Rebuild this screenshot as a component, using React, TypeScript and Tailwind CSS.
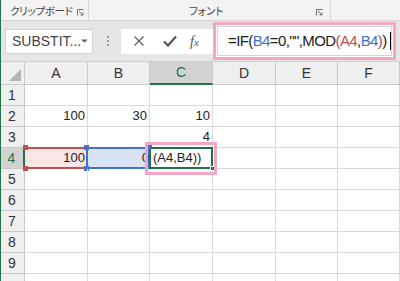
import React from 'react';

const cols = [
  { key: 'A', w: 'w-[63px]' },
  { key: 'B', w: 'w-[62px]' },
  { key: 'C', w: 'w-[63px]' },
  { key: 'D', w: 'w-[63px]' },
  { key: 'E', w: 'w-[62px]' },
  { key: 'F', w: 'w-[62px]' },
];

const values: Record<string, string> = {
  A2: '100',
  B2: '30',
  C2: '10',
  C3: '4',
  A4: '100',
};

const Launcher: React.FC = () => (
  <svg width="7" height="7" viewBox="0 0 7 7" className="text-gray-500">
    <path d="M0.5 6.5V0.5H6.5" fill="none" stroke="currentColor" strokeWidth="1" />
    <path d="M2 2L6 6M3.5 6H6V3.5" fill="none" stroke="currentColor" strokeWidth="1" />
  </svg>
);

const Cell: React.FC<{ col: string; row: number; w: string }> = ({ col, row, w }) => {
  const id = `${col}${row}`;
  const base = `relative h-full ${w} shrink-0 border-r border-b border-[#dadada]`;

  if (id === 'A4') {
    return (
      <div className={`${base} bg-[#fbe5e6]`}>
        <div className="absolute -top-px -left-px right-0 -bottom-px border-y-2 border-[#c0504d]" />
        <span className="absolute left-[-2px] top-[-3px] h-[5px] w-[5px] bg-[#c0504d]" />
        <span className="absolute left-[-2px] bottom-[-3px] h-[5px] w-[5px] bg-[#c0504d]" />
        <div className="relative flex h-full items-center justify-end pr-[2px] text-[13px] text-[#222]">100</div>
      </div>
    );
  }
  if (id === 'B4') {
    return (
      <div className={`${base} bg-[#dae3f3]`}>
        <div className="absolute -top-px -left-[2px] -right-px -bottom-px border-2 border-[#4472c4]" />
        <span className="absolute left-[-4px] top-[-3px] h-[5px] w-[5px] bg-[#4472c4]" />
        <span className="absolute right-[-3px] top-[-3px] h-[5px] w-[5px] bg-[#4472c4]" />
        <span className="absolute left-[-4px] bottom-[-3px] h-[5px] w-[5px] bg-[#4472c4]" />
        <div className="relative flex h-full items-center justify-end pr-0 text-[13px] text-[#222]">
          <span>0</span>
        </div>
      </div>
    );
  }
  if (id === 'C4') {
    return (
      <div className={`${base} z-10 bg-white`}>
        <div className="absolute -top-px -left-px -right-px -bottom-px border-2 border-[#217346]" />
        <span className="absolute right-[-3px] bottom-[-3px] h-[5px] w-[5px] border border-white bg-[#217346]" />
        <span className="absolute left-[-3px] top-[-3px] h-[4px] w-[4px] bg-[#4472c4]" />
        <div className="relative flex h-full items-center pl-[3px] text-[13px] text-[#222]">(A4,B4))</div>
        <div className="absolute -top-[6px] -left-[5px] -right-[5px] -bottom-[7px] border-[3px] border-[#f4a7c4]" />
      </div>
    );
  }

  return (
    <div className={base}>
      <div className="flex h-full items-center justify-end pr-[2px] text-[13px] text-[#222]">{values[id] ?? ''}</div>
    </div>
  );
};

const App: React.FC = () => {
  const rows = [1, 2, 3, 4, 5, 6, 7, 8, 9, 10];

  return (
    <div className="relative h-[281px] w-[400px] overflow-hidden bg-white font-['Liberation_Sans','Noto_Sans_CJK_JP',sans-serif]">
      {/* window edge */}
      <div className="absolute left-0 top-0 z-30 h-full w-px bg-[#217346]" />

      {/* ribbon group labels */}
      <div className="flex h-[21px] border-b border-[#d6d6d6] bg-[#f3f3f3] text-[10.5px] text-[#444] font-['Noto_Sans_CJK_JP',sans-serif] [font-feature-settings:'palt']">
        <div className="flex w-[89px] items-center whitespace-nowrap border-r border-[#d6d6d6] pl-[10px] pt-[1px]">
          <span className="tracking-[-0.3px]">クリップボード</span>
          <span className="ml-auto mr-[4px] mt-[3px]"><Launcher /></span>
        </div>
        <div className="flex w-[242px] items-center whitespace-nowrap border-r border-[#d6d6d6] pt-[1px]">
          <span className="ml-[100px]">フォント</span>
          <span className="ml-auto mr-[7px] mt-[3px]"><Launcher /></span>
        </div>
      </div>

      {/* formula bar */}
      <div className="flex h-[40px] items-center bg-[#e6e6e6]">
        <div className="ml-[5px] flex h-[25px] w-[88px] items-center border border-[#d4d4d4] bg-white pl-[6px] text-[14px] text-[#444]">
          <span>SUBSTIT...</span>
          <svg width="8" height="5" viewBox="0 0 8 5" className="ml-auto mr-[4px]">
            <path d="M0 0H8L4 4Z" fill="#666" />
          </svg>
        </div>
        <div className="ml-[14px] flex flex-col gap-[2px]">
          <span className="h-[2px] w-[2px] bg-[#9a9a9a]" />
          <span className="h-[2px] w-[2px] bg-[#9a9a9a]" />
          <span className="h-[2px] w-[2px] bg-[#9a9a9a]" />
        </div>
        <div className="ml-[12px] flex h-[25px] w-[94px] items-center bg-white text-[#555]">
          <svg width="12" height="12" viewBox="0 0 12 12" className="ml-[12px]">
            <path d="M1.5 1.5L10.5 10.5M10.5 1.5L1.5 10.5" stroke="#666" strokeWidth="1.4" fill="none" />
          </svg>
          <svg width="14" height="12" viewBox="0 0 14 12" className="ml-[18px]">
            <path d="M1 6.5L5 10.5L13 1.5" stroke="#555" strokeWidth="2.2" fill="none" />
          </svg>
          <span className="ml-[13px] font-['Liberation_Serif',serif] text-[14px] italic text-[#555]">
            f<span className="text-[11px]">x</span>
          </span>
        </div>
        <div className="ml-[-2px] flex h-[38px] w-[183px] items-center border-[3px] border-[#f4a7c4] bg-white p-[1px]">
          <div className="flex h-full w-full items-center border border-[#d4d4d4] pl-[10px] text-[15px] tracking-[-0.04em] text-[#222]">
            <span>=IF(</span>
            <span className="text-[#3f6fc6]">B4</span>
            <span>=0,"",MOD</span>
            <span className="text-[#b5475b]">(</span>
            <span className="text-[#c0504d]">A4</span>
            <span>,</span>
            <span className="text-[#3f6fc6]">B4</span>
            <span className="text-[#b5475b]">)</span>
            <span>)</span>
            <span className="ml-[3px] h-[18px] w-px bg-black" />
          </div>
        </div>
      </div>

      {/* grid */}
      <div className="flex flex-col">
        <div className="flex h-[24px] border-t border-[#d0d0d0] bg-[#efefef] text-[14px] text-[#333]">
          <div className="relative h-full w-[25px] shrink-0 border-r border-b border-[#c8c8c8]">
            <svg width="12" height="12" viewBox="0 0 12 12" className="absolute bottom-[3px] right-[3px]">
              <path d="M12 0V12H0Z" fill="#b4b4b4" />
            </svg>
          </div>
          {cols.map((c) => (
            <div
              key={c.key}
              className={`flex h-full ${c.w} shrink-0 items-center justify-center border-r ${
                c.key === 'C'
                  ? 'border-b-2 border-r-[#c8c8c8] border-b-[#217346] bg-[#d2d2d2] text-[#217346]'
                  : 'border-b border-[#c8c8c8]'
              }`}
            >
              {c.key}
            </div>
          ))}
        </div>

        {rows.map((r) => (
          <div key={r} className="flex h-[21px]">
            <div
              className={`flex h-full w-[25px] shrink-0 items-center justify-center border-b text-[14px] ${
                r === 4
                  ? 'border-r-2 border-r-[#217346] border-b-[#c8c8c8] bg-[#d2d2d2] text-[#217346]'
                  : 'border-r border-[#c8c8c8] bg-[#efefef] text-[#333]'
              }`}
            >
              {r < 10 ? r : ''}
            </div>
            {cols.map((c) => (
              <Cell key={c.key} col={c.key} row={r} w={c.w} />
            ))}
          </div>
        ))}
      </div>
    </div>
  );
};

export default App;
